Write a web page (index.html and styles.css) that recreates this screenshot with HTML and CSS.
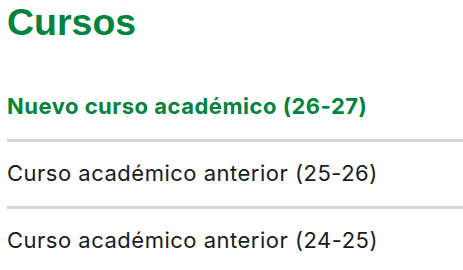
FILE: index.html
```html
<!DOCTYPE html>
<html lang="es">
<head>
<meta charset="UTF-8">
<meta name="viewport" content="width=device-width, initial-scale=1.0">
<title>Cursos</title>
<link rel="stylesheet" href="styles.css">
</head>
<body>

<h1 class="page-title">Cursos</h1>

<!-- Lista de cursos académicos -->
<ul class="course-list">
    <li class="course-item active"><a href="#">Nuevo curso académico (26-27)</a></li>
    <li class="course-item"><a href="#">Curso académico anterior (25-26)</a></li>
    <li class="course-item"><a href="#">Curso académico anterior (24-25)</a></li>
</ul>

</body>
</html>
```

FILE: styles.css
```css
body {
    margin: 0;
    padding: 0 0 0 7px;
    font-family: Inter, "Liberation Sans", sans-serif;
    background: #fff;
}
.page-title {
    margin: 0 0 31px 0;
    font-family: "Liberation Sans", Arial, sans-serif;
    font-size: 37.5px;
    line-height: 44px;
    font-weight: bold;
    color: #00843d;
}
.course-list {
    list-style: none;
    margin: 0;
    padding: 0;
}
.course-item {
    padding: 19px 0 20px 0;
    border-bottom: 3px solid #d4d5dc;
}
.course-item a {
    display: block;
    font-size: 22px;
    line-height: 25px;
    letter-spacing: 0.5px;
    color: #1b1b1b;
    text-decoration: none;
}
.course-item.active a {
    color: #00843d;
    font-weight: bold;
}
```
